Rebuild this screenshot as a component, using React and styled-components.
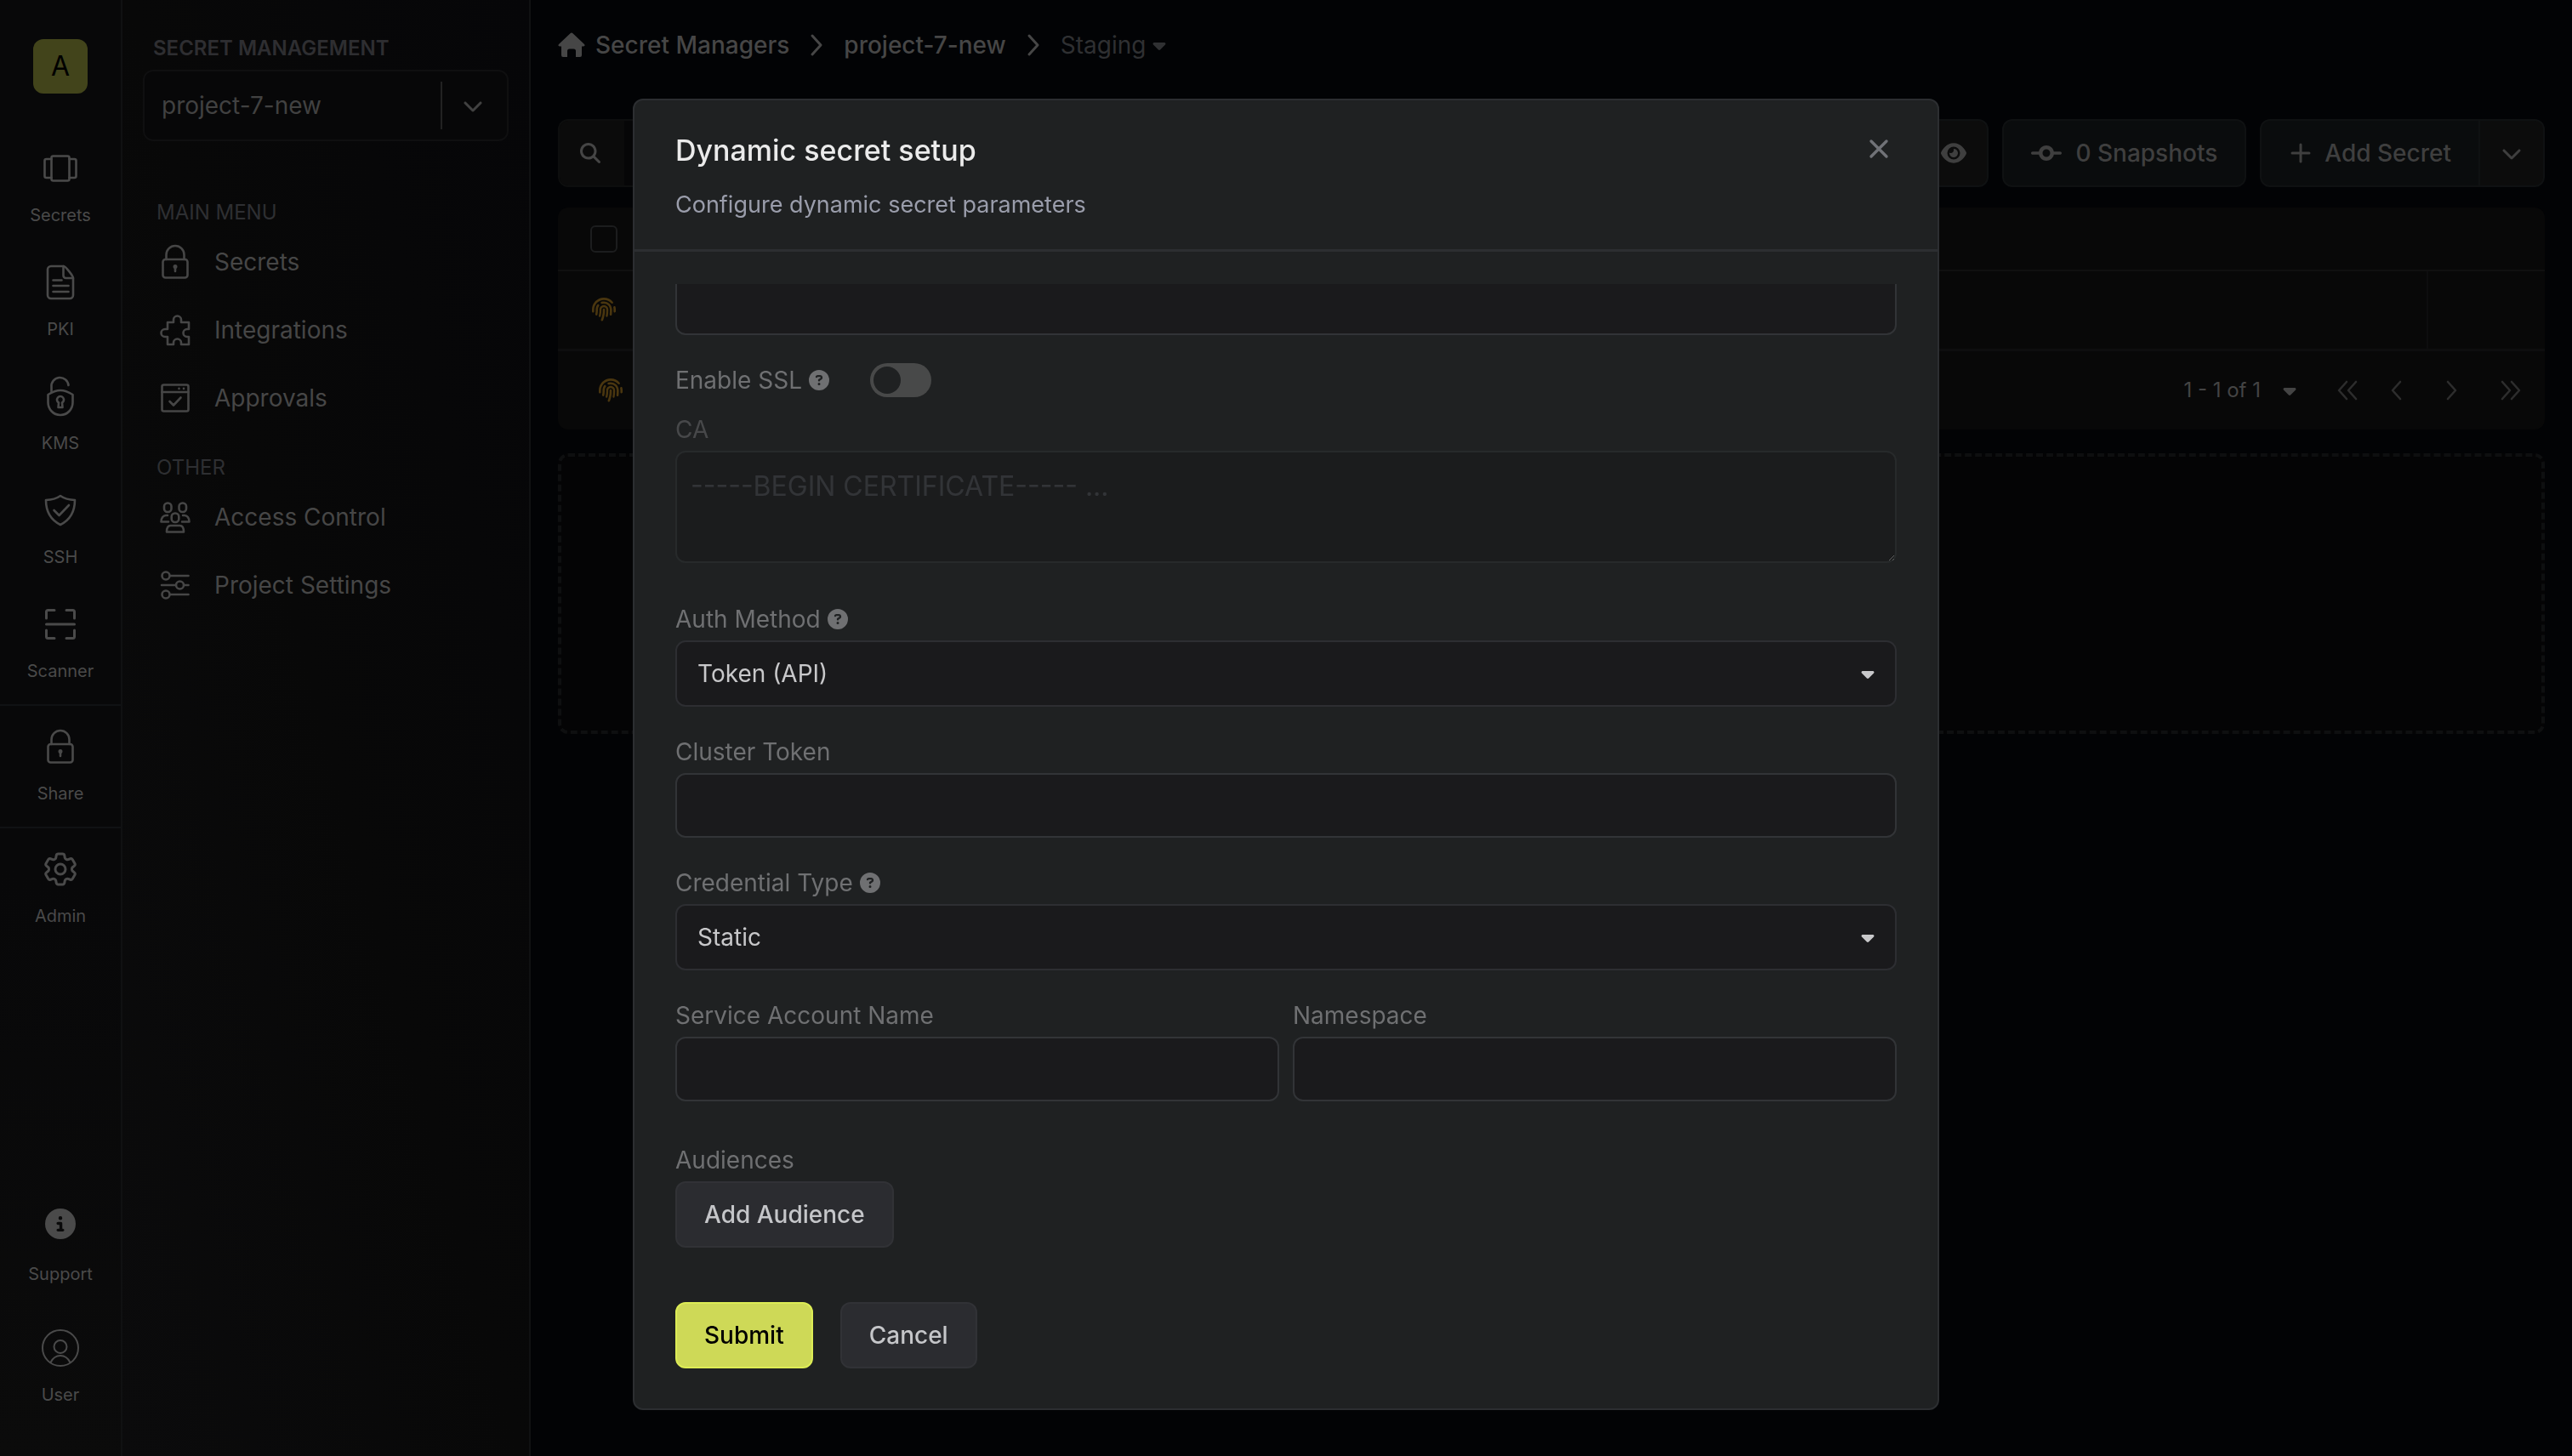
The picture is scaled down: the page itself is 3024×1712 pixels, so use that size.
import React, { useState } from 'react';
import styled, { createGlobalStyle } from 'styled-components';
import {
  FaCaretDown,
  FaChevronDown,
  FaCircleInfo,
  FaCircleQuestion,
  FaCodeCommit,
  FaEye,
  FaFingerprint,
  FaMagnifyingGlass,
} from 'react-icons/fa6';
import { HiOutlineCog6Tooth } from 'react-icons/hi2';

const GlobalStyle = createGlobalStyle`
  * {
    box-sizing: border-box;
  }
  body {
    margin: 0;
    background: #020305;
    color: #454545;
    font-family: Inter, 'Liberation Sans', sans-serif;
    font-size: 28px;
    line-height: 42px;
  }
  button, input, select, textarea {
    font: inherit;
    color: inherit;
  }
  button {
    cursor: pointer;
  }
`;

const Page = styled.div`
  display: flex;
  min-height: 100vh;
`;

/* ---------- icons ---------- */

const Stroke = styled.svg`
  width: ${(props) => props.$size || 48}px;
  height: ${(props) => props.$size || 48}px;
  flex: none;
  fill: none;
  stroke: currentColor;
  stroke-width: ${(props) => props.$weight || 2.6};
  stroke-linecap: round;
  stroke-linejoin: round;
`;

const VaultIcon = () => (
  <Stroke viewBox='0 0 48 48'>
    <rect x='13.5' y='9.5' width='21' height='29' rx='2' />
    <path d='M13.5 13H7.5a2 2 0 0 0-2 2v18a2 2 0 0 0 2 2h6M34.5 13h6a2 2 0 0 1 2 2v18a2 2 0 0 1-2 2h-6' />
  </Stroke>
);

const NoteIcon = () => (
  <Stroke viewBox='0 0 48 48'>
    <path d='M13 5h15c1.500 0 11 11 11 14v20a4 4 0 0 1-4 4H13a4 4 0 0 1-4-4V9a4 4 0 0 1 4-4z' />
    <path d='M27.500 5v11a3 3 0 0 0 3 3H39M15.500 21.500h10M15.500 28h18M15.500 35h18' />
  </Stroke>
);

const UnlockIcon = () => (
  <Stroke viewBox='0 0 48 48'>
    <path d='M13.500 18.500V13a10 10 0 0 1 20-2' />
    <path d='M24 17c4 0 9 1.500 14.500 5v9c0 8-6 15-14.500 15S9.500 39 9.500 31v-9c5.500-3.500 10.500-5 14.500-5z' />
    <path d='M22 31.500a4 4 0 1 1 4 0l.5 5.500h-5z' />
  </Stroke>
);

const ShieldIcon = () => (
  <Stroke viewBox='0 0 48 48'>
    <path d='M24 7c5 3.500 11 4.800 17 5 0 13-5 23-17 29C12 35 7 25 7 12c6-.2 12-1.500 17-5z' />
    <path d='M16.500 24l6 6 11.500-12' />
  </Stroke>
);

const ScanIcon = () => (
  <Stroke viewBox='0 0 48 48' $weight={3}>
    <path d='M17 7.500H9.500a2 2 0 0 0-2 2V17M31 7.500h7.500a2 2 0 0 1 2 2V17M17 40.500H9.500a2 2 0 0 1-2-2V31M31 40.500h7.500a2 2 0 0 0 2-2V31M7.500 24h33' />
  </Stroke>
);

const LockIcon = () => (
  <Stroke viewBox='0 0 48 48'>
    <rect x='9.500' y='21' width='29' height='21.500' rx='3' />
    <path d='M13.500 21v-5.500a10.500 10.500 0 0 1 21 0V21M24 31v4' />
    <circle cx='24' cy='29.500' r='1.200' />
  </Stroke>
);

const PuzzleIcon = () => (
  <Stroke viewBox='0 0 48 48'>
    <path d='M15 15h7v-3a4.500 4.500 0 0 1 9 0v3h9v8h-2a4.500 4.500 0 0 0 0 9h2v9h-9v-2a4.500 4.500 0 0 0-9 0v2h-7v-9h-3a4.500 4.500 0 0 1 0-9h3z' />
  </Stroke>
);

const ApprovalIcon = () => (
  <Stroke viewBox='0 0 48 48'>
    <rect x='8.500' y='8.500' width='31' height='31' rx='2' />
    <path d='M8.500 17h31M28.500 12.800v.1M34 12.800v.1M17.500 28l4.500 4.500 8.500-9' />
  </Stroke>
);

const UsersIcon = () => (
  <Stroke viewBox='0 0 48 48'>
    <rect x='11' y='7.500' width='8.500' height='10.500' rx='4' />
    <rect x='28.500' y='7.500' width='8.500' height='10.500' rx='4' />
    <rect x='19.700' y='19.500' width='8.600' height='10.500' rx='4' />
    <path d='M15 22h-2c-3 0-5.500 3-5.500 7.500H16M33 22h2c3 0 5.500 3 5.500 7.500H32M18.500 34h11c3 0 4.500 3 4.500 7.500H14c0-4.500 1.500-7.500 4.500-7.500z' />
  </Stroke>
);

const SlidersIcon = () => (
  <Stroke viewBox='0 0 48 48'>
    <circle cx='13' cy='13' r='4.500' />
    <circle cx='29.500' cy='24' r='4.500' />
    <circle cx='13' cy='35' r='4.500' />
    <path d='M18 13h21.500M8 24h16.500M34.500 24h5M18 35h21.500' />
  </Stroke>
);

const UserIcon = () => (
  <Stroke viewBox='0 0 48 48' $weight={2}>
    <circle cx='24' cy='24' r='21' />
    <circle cx='24' cy='22.500' r='7.500' />
    <path d='M12.500 41c2.500-5 6.500-8 11.500-8s9 3 11.500 8' />
  </Stroke>
);

const HomeIcon = () => (
  <svg width='32' height='30' viewBox='0 0 32 30' fill='currentColor' aria-hidden='true'>
    <path d='M14.500 1.300a2 2 0 0 1 3 0L31 14c1 1.200.6 2.500-1 2.500h-2V27a2 2 0 0 1-2 2h-5v-7a2.500 2.500 0 0 0-2.500-2.500h-5A2.500 2.500 0 0 0 11 22v7H6a2 2 0 0 1-2-2V16.500H2c-1.600 0-2-1.300-1-2.500z' />
  </svg>
);

const PlusIcon = () => (
  <Stroke viewBox='0 0 28 28' $size={28} $weight={3}>
    <path d='M14 4v20M4 14h20' />
  </Stroke>
);

const CloseIcon = () => (
  <Stroke viewBox='0 0 36 36' $size={36} $weight={3.4}>
    <path d='M9 9l18 18M27 9L9 27' />
  </Stroke>
);

const pagerPaths = {
  first: 'M14 5l-9 10 9 10M25 5l-9 10 9 10',
  prev: 'M19 5l-9 10 9 10',
  next: 'M11 5l9 10-9 10',
  last: 'M5 5l9 10-9 10M16 5l9 10-9 10',
};

const PagerIcon = ({ type }) => (
  <Stroke viewBox='0 0 30 30' $size={30}>
    <path d={pagerPaths[type]} />
  </Stroke>
);

const InfoIcon = styled(FaCircleInfo)`
  width: 48px;
  height: 48px;
  padding: 6px;
`;

/* ---------- left rail ---------- */

const Rail = styled.nav`
  display: flex;
  flex-direction: column;
  flex: none;
  width: 144px;
  padding: 46px 0 37px;
  border-right: 2px solid #101112;
  background: linear-gradient(10deg, #0b0b0b, #080809 40%);
`;

const OrgButton = styled.button`
  align-self: center;
  width: 64px;
  height: 64px;
  margin-bottom: 44px;
  padding: 0;
  border: 0;
  border-radius: 12px;
  background: #42441b;
  color: #000;
  font-size: 32px;
`;

const RailLink = styled.a`
  display: flex;
  flex-direction: column;
  align-items: center;
  gap: ${(props) => props.$gap || 16}px;
  height: ${(props) => props.$height || 134}px;
  padding-top: ${(props) => (props.$divided ? 24 : 20)}px;
  border-top: ${(props) => (props.$divided ? '2px solid #101214' : '0')};
  color: #4a4a4a;
  font-size: 20px;
  line-height: 30px;
  text-decoration: none;
`;

const RailGroup = styled.div`
  padding-top: ${(props) => (props.$spaced ? 4 : 0)}px;
  margin-top: ${(props) => (props.$bottom ? 'auto' : 0)};
`;

const railItems = [
  { label: 'Secrets', icon: <VaultIcon /> },
  { label: 'PKI', icon: <NoteIcon /> },
  { label: 'KMS', icon: <UnlockIcon /> },
  { label: 'SSH', icon: <ShieldIcon /> },
  { label: 'Scanner', icon: <ScanIcon /> },
];

/* ---------- project menu ---------- */

const Menu = styled.aside`
  flex: none;
  width: 480px;
  padding: 38px 24px 0;
  border-right: 2px solid #101112;
  background: linear-gradient(75deg, #0b0b0c, #080808 50%, #060608);
`;

const MenuTitle = styled.h2`
  margin: 0 0 6px 12px;
  color: #2e2e31;
  font-size: 24px;
  font-weight: 600;
  line-height: 38px;
`;

const ProjectButton = styled.button`
  display: flex;
  align-items: center;
  width: 100%;
  height: 84px;
  margin-bottom: 66px;
  padding: 0 28px 0 20px;
  border: 2px solid #0f0f10;
  border-radius: 12px;
  background: #070708;
  color: #414141;
  text-align: left;
`;

const ProjectName = styled.span`
  flex: 1;
`;

const ProjectArrow = styled.span`
  display: flex;
  align-items: center;
  height: 56px;
  padding-left: 24px;
  border-left: 2px solid #222;
`;

const MenuLabel = styled.h3`
  margin: 0 0 0 16px;
  color: #2e2f32;
  font-size: 24px;
  font-weight: 400;
  line-height: 36px;
`;

const MenuList = styled.ul`
  margin: 0 0 24px;
  padding: 0;
  list-style: none;
`;

const MenuLink = styled.a`
  display: flex;
  align-items: center;
  gap: 22px;
  height: 80px;
  padding-left: 14px;
  color: #464646;
  text-decoration: none;
`;

/* ---------- main view ---------- */

const Main = styled.main`
  flex: 1;
  min-width: 0;
  padding: 32px 32px 0;
`;

const Crumbs = styled.nav`
  display: flex;
  align-items: center;
  height: 42px;
  color: #464646;
`;

const CrumbLink = styled.a`
  display: flex;
  align-items: center;
  gap: 12px;
  color: inherit;
  font-weight: 500;
  text-decoration: none;
`;

const CrumbGap = styled.span`
  display: flex;
  margin: 0 18px;
`;

const CrumbArrow = () => (
  <CrumbGap>
    <Stroke viewBox='0 0 28 28' $size={28} $weight={3}>
      <path d='M9 3l10 11L9 25' />
    </Stroke>
  </CrumbGap>
);

const EnvButton = styled.button`
  display: flex;
  align-items: center;
  gap: 4px;
  padding: 0;
  border: 0;
  background: none;
  color: #2f3032;
`;

const Toolbar = styled.div`
  display: flex;
  gap: 16px;
  margin-top: 66px;
`;

const SearchBox = styled.label`
  display: flex;
  align-items: center;
  flex: 1;
  height: 80px;
  border: 2px solid #0d0e0e;
  border-radius: 12px;
  background: #060607;
  overflow: hidden;
`;

const SearchIcon = styled.span`
  display: flex;
  align-items: center;
  align-self: stretch;
  padding: 0 28px 0 24px;
  background: #0b0b0b;
`;

const SearchInput = styled.input`
  flex: 1;
  border: 0;
  outline: 0;
  background: none;
`;

const ToolButton = styled.button`
  display: flex;
  align-items: center;
  gap: ${(props) => props.$gap || 16}px;
  height: 80px;
  padding: 0 ${(props) => props.$pad || 32}px;
  border: 2px solid #0f1112;
  border-radius: ${(props) => props.$radius || '12px'};
  background: ${(props) => (props.$plain ? '#0c0c0c' : '#0a0c0d')};
  color: #3f3f3f;
  font-weight: 500;
`;

const SplitButton = styled.div`
  display: flex;

  button + button {
    border-left-width: 0;
  }
`;

const TableCard = styled.section`
  margin-top: 24px;
  border-radius: 12px;
  background: #080808;
  overflow: hidden;
`;

const SecretTable = styled.table`
  width: 100%;
  border-collapse: collapse;
  table-layout: fixed;

  th {
    height: 74px;
    padding: 0;
    border-bottom: 2px solid #101010;
    text-align: left;
  }
  td {
    height: 93px;
    padding: 0;
    border-bottom: 3px solid #0e0e0f;
  }
  .pick {
    width: 110px;
    padding-left: 38px;
  }
  .actions {
    width: 138px;
  }
  td.actions {
    border-left: 2px solid #0d0d0e;
  }
`;

const Check = styled.input`
  display: block;
  appearance: none;
  width: 32px;
  height: 32px;
  margin: 0;
  border: 2px solid #1c1d1e;
  border-radius: 6px;
`;

const Fingerprint = styled(FaFingerprint)`
  display: block;
  width: 28px;
  height: 28px;
  margin-left: 2px;
  color: #4a360f;
`;

const Pager = styled.div`
  display: flex;
  align-items: center;
  height: 92px;
  padding: 0 22px 0 46px;
  color: #444;
  font-size: 24px;
`;

const PagerInfo = styled.span`
  display: flex;
  align-items: center;
  gap: 22px;
  margin: 0 38px 0 auto;
`;

const PagerButton = styled.button`
  display: flex;
  justify-content: center;
  width: 36px;
  margin-left: ${(props) => props.$gap || 0}px;
  padding: 0;
  border: 0;
  background: none;
  color: #2d2d2d;
`;

const DropZone = styled.div`
  height: 330px;
  margin-top: 28px;
  border: 4px dashed #0e0f10;
  border-radius: 12px;
  background: #040405;
`;

/* ---------- dialog ---------- */

const Overlay = styled.div`
  position: fixed;
  inset: 0;
  display: flex;
  justify-content: center;
  padding: 116px 24px 54px;
`;

const Dialog = styled.section`
  display: flex;
  flex-direction: column;
  width: 100%;
  max-width: 1536px;
  border: 2px solid #2c2e31;
  border-radius: 12px;
  background: #1f2122;
  color: #6f7072;
  overflow: hidden;
`;

const DialogHeader = styled.header`
  display: flex;
  justify-content: space-between;
  align-items: flex-start;
  padding: 33px 51px 31px 48px;
  border-bottom: 3px solid #2c2e31;
`;

const DialogTitle = styled.h1`
  margin: 0 0 17px;
  color: #ebebeb;
  font-size: 34px;
  font-weight: 500;
  line-height: 52px;
`;

const DialogText = styled.p`
  margin: 0;
  color: #9a9dab;
  font-size: 27px;
`;

const CloseButton = styled.button`
  display: flex;
  margin-top: 6px;
  padding: 0;
  border: 0;
  background: none;
  color: #707277;
`;

const DialogBody = styled.form`
  display: flex;
  flex-direction: column;
  flex: 1;
  min-height: 0;
  padding: 38px 48px 47px;
`;

/* Keeps the end of the form in view when it is taller than the dialog */
const Scroller = styled.div`
  display: flex;
  flex-direction: column;
  justify-content: flex-end;
  flex: 1;
  min-height: 0;
  overflow: hidden;

  > * {
    flex: none;
  }
`;

const Field = styled.div`
  display: flex;
  flex-direction: column;
  flex: 1;
  margin-bottom: ${(props) => props.$gap || 32}px;
  opacity: ${(props) => (props.$dim ? 0.5 : 1)};
`;

const Label = styled.label`
  display: flex;
  align-items: center;
  gap: 8px;
  margin-bottom: 4px;
`;

const TextInput = styled.input`
  width: 100%;
  height: 76px;
  padding: 0 24px;
  border: 2px solid #323437;
  border-radius: 12px;
  background: #1a1a1c;
  color: #c8c8c8;
  outline: 0;
`;

const TextArea = styled.textarea`
  display: block;
  width: 100%;
  height: 132px;
  padding: 16px;
  border: 2px solid #2f3334;
  border-radius: 12px;
  background: #19191a;
  font-size: 32px;
  line-height: 48px;
  resize: vertical;

  &::placeholder {
    color: #46474d;
    opacity: 1;
  }
`;

const SelectWrap = styled.div`
  position: relative;
  color: #c8c8ca;

  svg {
    position: absolute;
    top: 27px;
    right: 22px;
    pointer-events: none;
  }
`;

const Select = styled.select`
  display: block;
  appearance: none;
  width: 100%;
  height: 78px;
  padding: 0 24px;
  border: 2px solid #2d2e32;
  border-radius: 12px;
  background: #1a1a1c;
  outline: 0;
`;

const SwitchRow = styled.div`
  display: flex;
  align-items: center;
  gap: 48px;
  height: 42px;
  margin-bottom: 16px;

  label {
    margin: 0;
  }
`;

const Switch = styled.input`
  appearance: none;
  display: flex;
  align-items: center;
  justify-content: ${(props) => (props.checked ? 'flex-end' : 'flex-start')};
  width: 72px;
  height: 40px;
  margin: 0;
  padding: 0 4px;
  border-radius: 20px;
  background: #484949;
  cursor: pointer;

  &::before {
    content: '';
    width: 32px;
    height: 32px;
    border-radius: 50%;
    background: #1f2122;
  }
`;

const Columns = styled.div`
  display: flex;
  gap: 16px;
`;

const Button = styled.button`
  align-self: flex-start;
  height: 78px;
  padding: 0 32px;
  border: 2px solid ${(props) => (props.$primary ? '#dcec55' : '#313236')};
  border-radius: 12px;
  background: ${(props) => (props.$primary ? '#ced957' : '#2b2c30')};
  color: ${(props) => (props.$primary ? '#000' : '#c5c6c9')};
  font-weight: 500;
`;

const Actions = styled.div`
  display: flex;
  gap: 32px;
`;

const Help = () => <FaCircleQuestion size={24} />;

const SelectField = ({ id, label, options }) => (
  <Field>
    <Label htmlFor={id}>
      {label}
      <Help />
    </Label>
    <SelectWrap>
      <Select id={id}>
        {options.map((option) => (
          <option key={option}>{option}</option>
        ))}
      </Select>
      <FaCaretDown size={24} />
    </SelectWrap>
  </Field>
);

const InputField = ({ id, label, gap }) => (
  <Field $gap={gap}>
    <Label htmlFor={id}>{label}</Label>
    <TextInput id={id} type='text' />
  </Field>
);

const SecretDialog = () => {
  const [ssl, setSsl] = useState(false);

  return (
    <Overlay>
      <Dialog role='dialog' aria-labelledby='dialog-title'>
        <DialogHeader>
          <div>
            <DialogTitle id='dialog-title'>Dynamic secret setup</DialogTitle>
            <DialogText>Configure dynamic secret parameters</DialogText>
          </div>
          <CloseButton aria-label='Close'>
            <CloseIcon />
          </CloseButton>
        </DialogHeader>
        <DialogBody onSubmit={(e) => e.preventDefault()}>
          <Scroller>
            <Field>
              <TextInput type='text' aria-label='Cluster URL' />
            </Field>
            <SwitchRow>
              <Label htmlFor='ssl'>
                Enable SSL
                <Help />
              </Label>
              <Switch
                id='ssl'
                type='checkbox'
                checked={ssl}
                onChange={() => setSsl(!ssl)}
              />
            </SwitchRow>
            <Field $gap={45} $dim>
              <Label htmlFor='ca'>CA</Label>
              <TextArea id='ca' placeholder='-----BEGIN CERTIFICATE----- ...' />
            </Field>
            <SelectField
              id='auth'
              label='Auth Method'
              options={['Token (API)', 'Gateway']}
            />
            <InputField id='token' label='Cluster Token' />
            <SelectField
              id='credential'
              label='Credential Type'
              options={['Static', 'Dynamic']}
            />
            <Columns>
              <InputField id='account' label='Service Account Name' gap={48} />
              <InputField id='namespace' label='Namespace' gap={48} />
            </Columns>
            <Field $gap={64}>
              <Label as='span'>Audiences</Label>
              <Button type='button'>Add Audience</Button>
            </Field>
            <Actions>
              <Button type='submit' $primary>
                Submit
              </Button>
              <Button type='button'>Cancel</Button>
            </Actions>
          </Scroller>
        </DialogBody>
      </Dialog>
    </Overlay>
  );
};

const MenuItem = ({ icon, children }) => (
  <li>
    <MenuLink href='#'>
      {icon}
      {children}
    </MenuLink>
  </li>
);

const App = () => {
  return (
    <>
      <GlobalStyle />
      <Page>
        <Rail>
          <OrgButton>A</OrgButton>
          {railItems.map((item) => (
            <RailLink href='#' key={item.label}>
              {item.icon}
              {item.label}
            </RailLink>
          ))}
          <RailGroup $spaced>
            <RailLink href='#' $height={144} $divided>
              <LockIcon />
              Share
            </RailLink>
            <RailLink href='#' $height={144} $divided>
              <HiOutlineCog6Tooth size={48} />
              Admin
            </RailLink>
          </RailGroup>
          <RailGroup $bottom>
            <RailLink href='#' $height={146} $gap={20}>
              <InfoIcon />
              Support
            </RailLink>
            <RailLink href='#'>
              <UserIcon />
              User
            </RailLink>
          </RailGroup>
        </Rail>
        <Menu>
          <MenuTitle>SECRET MANAGEMENT</MenuTitle>
          <ProjectButton>
            <ProjectName>project-7-new</ProjectName>
            <ProjectArrow>
              <FaChevronDown size={24} />
            </ProjectArrow>
          </ProjectButton>
          <MenuLabel>MAIN MENU</MenuLabel>
          <MenuList>
            <MenuItem icon={<LockIcon />}>Secrets</MenuItem>
            <MenuItem icon={<PuzzleIcon />}>Integrations</MenuItem>
            <MenuItem icon={<ApprovalIcon />}>Approvals</MenuItem>
          </MenuList>
          <MenuLabel>OTHER</MenuLabel>
          <MenuList>
            <MenuItem icon={<UsersIcon />}>Access Control</MenuItem>
            <MenuItem icon={<SlidersIcon />}>Project Settings</MenuItem>
          </MenuList>
        </Menu>
        <Main>
          <Crumbs>
            <CrumbLink href='#'>
              <HomeIcon />
              Secret Managers
            </CrumbLink>
            <CrumbArrow />
            <CrumbLink href='#'>project-7-new</CrumbLink>
            <CrumbArrow />
            <EnvButton>
              Staging
              <FaCaretDown size={24} />
            </EnvButton>
          </Crumbs>
          <Toolbar>
            <SearchBox>
              <SearchIcon>
                <FaMagnifyingGlass size={24} />
              </SearchIcon>
              <SearchInput type='search' aria-label='Search' />
            </SearchBox>
            <ToolButton $pad={24} $plain aria-label='Show values'>
              <FaEye size={30} />
            </ToolButton>
            <ToolButton>
              <FaCodeCommit size={36} />0 Snapshots
            </ToolButton>
            <SplitButton>
              <ToolButton $gap={14} $radius='12px 0 0 12px'>
                <PlusIcon />
                Add Secret
              </ToolButton>
              <ToolButton
                $pad={25}
                $plain
                $radius='0 12px 12px 0'
                aria-label='More actions'
              >
                <FaChevronDown size={24} />
              </ToolButton>
            </SplitButton>
          </Toolbar>
          <TableCard>
            <SecretTable>
              <thead>
                <tr>
                  <th className='pick'>
                    <Check type='checkbox' aria-label='Select all' />
                  </th>
                  <th />
                  <th className='actions' />
                </tr>
              </thead>
              <tbody>
                <tr>
                  <td className='pick'>
                    <Fingerprint />
                  </td>
                  <td />
                  <td className='actions' />
                </tr>
              </tbody>
            </SecretTable>
            <Pager>
              <Fingerprint />
              <PagerInfo>
                1 - 1 of 1
                <FaCaretDown size={24} />
              </PagerInfo>
              <PagerButton aria-label='First page'>
                <PagerIcon type='first' />
              </PagerButton>
              <PagerButton aria-label='Previous page' $gap={22}>
                <PagerIcon type='prev' />
              </PagerButton>
              <PagerButton aria-label='Next page' $gap={28}>
                <PagerIcon type='next' />
              </PagerButton>
              <PagerButton aria-label='Last page' $gap={34}>
                <PagerIcon type='last' />
              </PagerButton>
            </Pager>
          </TableCard>
          <DropZone />
        </Main>
      </Page>
      <SecretDialog />
    </>
  );
};

export default App;
